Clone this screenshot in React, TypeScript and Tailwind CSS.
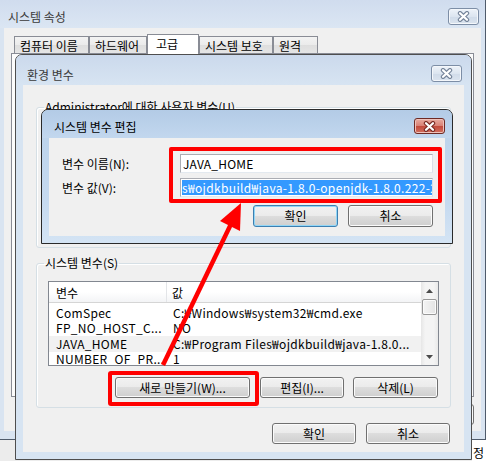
import React from "react";

const XGlyph = ({ dark }: { dark: string }) => (
  <svg width="13" height="11" viewBox="0 0 13 11">
    <path d="M3 2.2 L10 8.8 M10 2.2 L3 8.8" stroke={dark} strokeWidth="4.4" strokeLinecap="round" fill="none" />
    <path d="M3 2.2 L10 8.8 M10 2.2 L3 8.8" stroke="#ffffff" strokeWidth="2.2" strokeLinecap="round" fill="none" />
  </svg>
);

const CloseInactive = () => (
  <div className="w-[31px] h-[17px] flex items-center justify-center rounded-[3px] border border-[#7d8ea6] bg-[linear-gradient(#eef3f9,#dce5f0_50%,#d0dbe9_51%,#dbe4ef)] shadow-[inset_0_0_0_1px_#f4f7fb]">
    <XGlyph dark="#75849a" />
  </div>
);

const CloseRed = () => (
  <div className="w-[31px] h-[16px] flex items-center justify-center rounded-[3px] border border-[#6e2a24] bg-[linear-gradient(#e8aa9f,#d98276_48%,#c24a3c_52%,#d2705f)] shadow-[inset_0_0_0_1px_#eec2bb]">
    <XGlyph dark="#7a2c25" />
  </div>
);

const Btn = ({ label, w, def }: { label: string; w: string; def?: boolean }) => (
  <div
    className={`${w} h-full flex items-center justify-center rounded-[3px] border ${
      def ? "border-[#3c7fb1] shadow-[inset_0_0_0_1px_#92d6f6]" : "border-[#707070] shadow-[inset_0_0_0_1px_#fbfbfb]"
    } bg-[linear-gradient(#f2f2f2_0%,#ebebeb_49%,#dddddd_50%,#cfcfcf_100%)] text-black whitespace-nowrap`}
  >
    {label}
  </div>
);

const tabs = [
  { t: "컴퓨터 이름", w: "w-[75px]", sel: false },
  { t: "하드웨어", w: "w-[58px]", sel: false },
  { t: "고급", w: "w-[52px]", sel: true },
  { t: "시스템 보호", w: "w-[74px]", sel: false },
  { t: "원격", w: "w-[45px]", sel: false },
];

const rows = [
  { n: "ComSpec", v: "C:₩Windows₩system32₩cmd.exe", hi: false },
  { n: "FP_NO_HOST_C...", v: "NO", hi: false },
  { n: "JAVA_HOME", v: "C:₩Program Files₩ojdkbuild₩java-1.8.0...", hi: true },
  { n: "NUMBER_OF_PR...", v: "1", hi: false },
];

export default function App() {
  return (
    <div className="relative w-[486px] h-[461px] overflow-hidden bg-[#ececec] text-[12px] leading-[16px] text-black font-['Noto_Sans_CJK_KR','Noto_Sans',sans-serif]">
      {/* Outer window: 시스템 속성 */}
      <div className="flex flex-col w-[486px] h-[440px] border-r border-b border-[#4f5b6b] bg-[#d9e4f1]">
        <div className="h-[28px] flex items-start justify-between pl-[8px] pr-[6px] bg-[linear-gradient(#d0dcee,#dbe6f3)]">
          <span className="mt-[9px] text-[#3a3a3a]">시스템 속성</span>
          <div className="mt-[8px]">
            <CloseInactive />
          </div>
        </div>
        <div className="mx-[4px] h-[403px] bg-[#f0f0f0] flex flex-col px-[7px] pt-[6px]">
          <div className="flex items-end h-[19px] pl-[3px]">
            {tabs.map((t) =>
              t.sel ? (
                <div
                  key={t.t}
                  className={`${t.w} h-[20px] -mb-[1px] relative z-10 border border-b-0 border-[#898c95] bg-white pl-[8px] pt-[1px]`}
                >
                  {t.t}
                </div>
              ) : (
                <div
                  key={t.t}
                  className={`${t.w} h-[17px] border border-b-0 border-[#898c95] bg-[linear-gradient(#f3f3f3,#ebebeb_50%,#dedede_51%,#e5e5e5)] pl-[5px] leading-[17px] whitespace-nowrap overflow-hidden`}
                >
                  {t.t}
                </div>
              )
            )}
          </div>
          <div className="h-[344px] border border-[#898c95] bg-[#fcfcfc]" />
          <div className="flex justify-end gap-[8px] mt-[7px] h-[21px]">
            <Btn label="확인" w="w-[75px]" />
            <Btn label="취소" w="w-[75px]" />
            <Btn label="적용(A)" w="w-[75px]" />
          </div>
        </div>
      </div>
      <div className="flex h-[21px]">
        <div className="flex-1 bg-[#ececec]" />
        <div className="w-[14px] bg-white overflow-hidden whitespace-nowrap pl-[1px] pt-[5px] text-[12px]">정</div>
      </div>

      {/* 환경 변수 window */}
      <div className="absolute left-[15px] top-[54px] w-[457px] h-[406px] flex flex-col border border-[#4e4e4e] rounded-t-[7px] bg-[#d7e4f2]">
        <div className="h-[30px] flex items-start justify-between pl-[11px] pr-[9px] rounded-t-[6px] bg-[linear-gradient(#cbd9ec,#d7e4f2)]">
          <span className="mt-[12px] text-[#3a3a3a]">환경 변수</span>
          <div className="mt-[10px]">
            <CloseInactive />
          </div>
        </div>
        <div className="mx-[7px] h-[367px] bg-[#f0f0f0] flex flex-col px-[13px] pt-[14px]">
          <fieldset className="h-[149px] border border-[#d5dfe5] rounded-[3px] px-[11px] shadow-[inset_1px_1px_0_#ffffff]">
            <legend className="-ml-[4px] px-[1px] leading-[16px]">Administrator에 대한 사용자 변수(U)</legend>
          </fieldset>
          <fieldset className="mt-[7px] border border-[#d5dfe5] rounded-[3px] px-[11px] pt-[10px] pb-[9px] shadow-[inset_1px_1px_0_#ffffff]">
            <legend className="-ml-[4px] px-[1px] leading-[16px]">시스템 변수(S)</legend>
            <div className="h-[85px] border border-[#828790] bg-white flex overflow-hidden">
              <div className="flex-1 flex flex-col overflow-hidden">
                <div className="h-[21px] flex-none flex border-b border-[#d5d5d5] bg-[linear-gradient(#ffffff,#ffffff_50%,#f3f4f6)]">
                  <div className="w-[118px] pl-[7px] pt-[3px] border-r border-[#e3e5e8]">변수</div>
                  <div className="flex-1 pl-[5px] pt-[3px]">값</div>
                </div>
                <div className="pt-[2px] flex flex-col">
                  {rows.map((r) => (
                    <div
                      key={r.n}
                      className={`h-[15.5px] flex-none flex items-center whitespace-nowrap tracking-[0.3px] ${r.hi ? "bg-[#f1f1f1]" : "bg-white"}`}
                    >
                      <div className="w-[118px] pl-[7px] overflow-hidden">{r.n}</div>
                      <div className="flex-1 pl-[6px] overflow-hidden">{r.v}</div>
                    </div>
                  ))}
                </div>
              </div>
              <div className="w-[17px] flex-none flex flex-col bg-[linear-gradient(90deg,#e6e6e6,#f4f4f4_25%,#f4f4f4_75%,#e9e9e9)]">
                <div className="h-[17px] flex items-center justify-center">
                  <svg width="7" height="4" viewBox="0 0 7 4">
                    <path d="M0 4 L3.5 0 L7 4 Z" fill="#4a4a4a" />
                  </svg>
                </div>
                <div className="h-[16px] mx-[1px] rounded-[2px] border border-[#979797] bg-[linear-gradient(90deg,#f4f4f4,#e4e4e4)] shadow-[inset_0_0_0_1px_#fbfbfb]" />
                <div className="flex-1" />
                <div className="h-[17px] flex items-center justify-center">
                  <svg width="7" height="4" viewBox="0 0 7 4">
                    <path d="M0 0 L3.5 4 L7 0 Z" fill="#4a4a4a" />
                  </svg>
                </div>
              </div>
            </div>
            <div className="mt-[11px] h-[21px] flex justify-end gap-[9px] mr-[1px]">
              <Btn label="새로 만들기(W)..." w="w-[135px] mr-[1px]" />
              <Btn label="편집(I)..." w="w-[84px]" />
              <Btn label="삭제(L)" w="w-[85px]" />
            </div>
          </fieldset>
          <div className="mt-[15px] h-[21px] flex justify-end gap-[10px] mr-[1px]">
            <Btn label="확인" w="w-[84px]" />
            <Btn label="취소" w="w-[84px]" />
          </div>
        </div>
      </div>

      {/* 시스템 변수 편집 dialog */}
      <div className="absolute left-[41px] top-[109px] w-[412px] h-[135px] flex flex-col border border-[#2a2a2a] rounded-t-[7px] bg-[linear-gradient(#b9d1ea,#c6daf0_70%,#d4e4f4)]">
        <div className="h-[28px] flex items-start justify-between pl-[12px] pr-[7px] rounded-t-[6px] bg-[linear-gradient(#b3cbe6,#c2d7ee)]">
          <span className="mt-[9px]">시스템 변수 편집</span>
          <div className="mt-[8px]">
            <CloseRed />
          </div>
        </div>
        <div className="mx-[7px] h-[98px] bg-[#f0f0f0] flex flex-col pt-[16px] pl-[13px] pr-[12px]">
          <div className="flex h-[19px]">
            <div className="w-[118px] flex items-center">변수 이름(N):</div>
            <div className="flex-1 border border-[#abadb3] border-r-[#dbdfe6] border-b-[#e3e9ef] bg-white pl-[2px] flex items-center tracking-[0.2px]">
              JAVA_HOME
            </div>
          </div>
          <div className="flex h-[19px] mt-[5px]">
            <div className="w-[118px] flex items-center">변수 값(V):</div>
            <div className="flex-1 border border-[#abadb3] border-r-[#dbdfe6] border-b-[#e3e9ef] bg-white px-[1px] py-[1px] overflow-hidden flex">
              <span className="bg-[#3399ff] text-white whitespace-nowrap leading-[15px] tracking-[0.35px]">
                s₩ojdkbuild₩java-1.8.0-openjdk-1.8.0.222-2
              </span>
            </div>
          </div>
          <div className="mt-[8px] h-[22px] flex justify-end gap-[10px]">
            <Btn label="확인" w="w-[85px]" def />
            <Btn label="취소" w="w-[85px]" />
          </div>
        </div>
      </div>

      {/* Annotations */}
      <div className="absolute left-[169px] top-[147px] w-[273px] h-[56px] border-[4px] border-[#ff0000] rounded-[2px]" />
      <div className="absolute left-[108px] top-[371px] w-[151px] h-[35px] border-[4px] border-[#ff0000] rounded-[3px]" />
      <svg className="absolute left-0 top-0 pointer-events-none" width="486" height="461" viewBox="0 0 486 461">
        <line x1="163" y1="365" x2="231" y2="224" stroke="#ff0000" strokeWidth="4.5" />
        <polygon points="241,203 220,221 240,231" fill="#ff0000" />
      </svg>
    </div>
  );
}
